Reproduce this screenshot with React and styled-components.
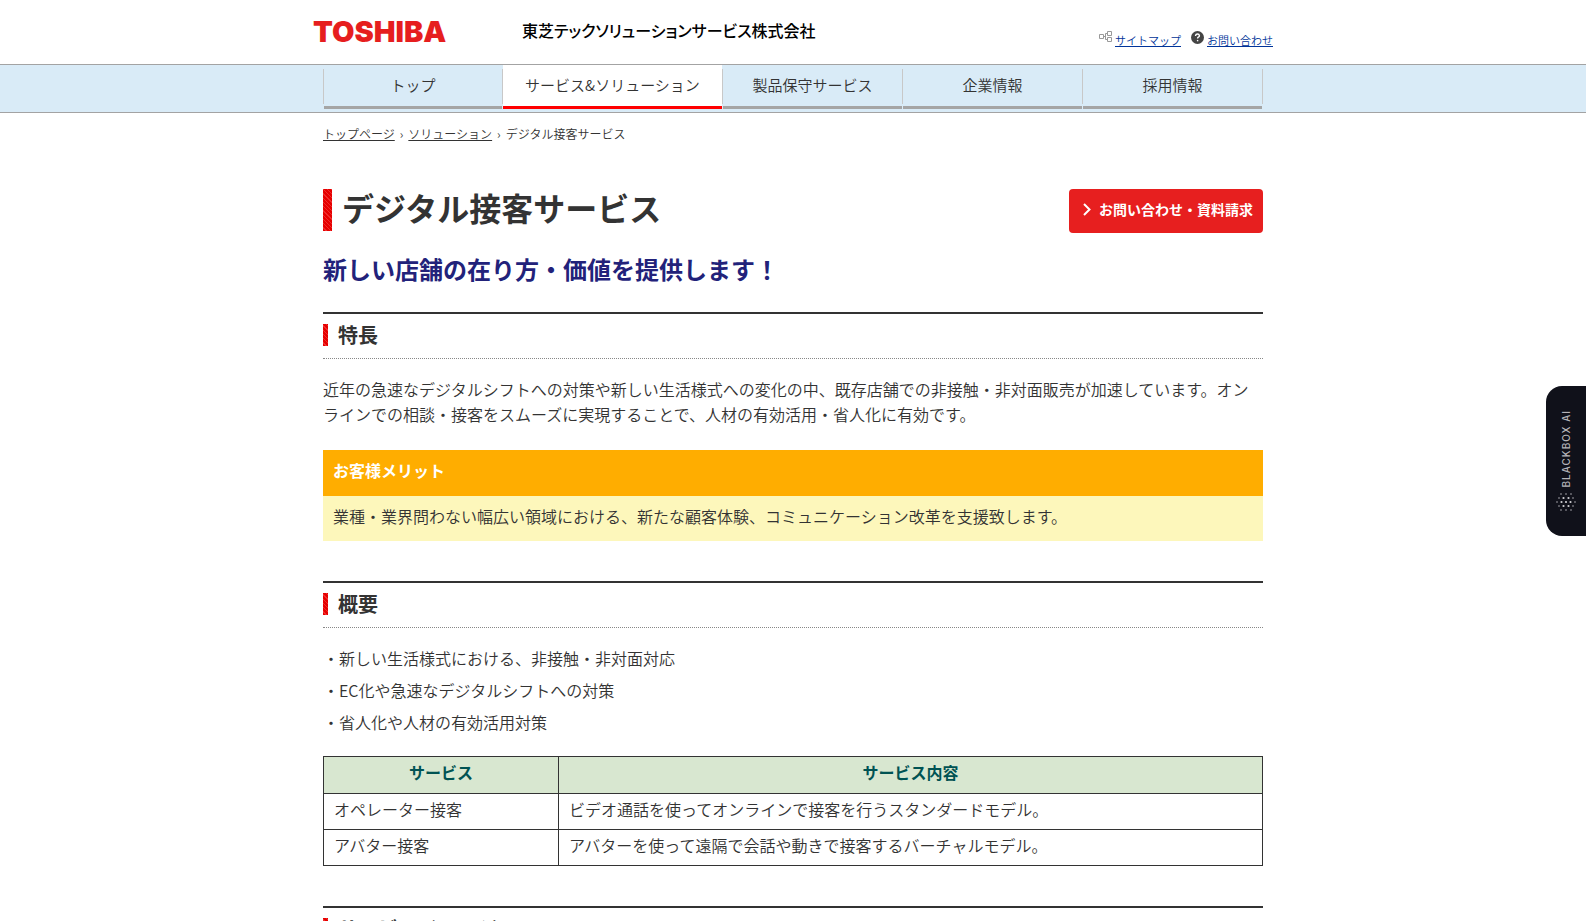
import React from 'react'
import styled, { createGlobalStyle } from 'styled-components';

const GlobalStyle = createGlobalStyle`
html {
  scrollbar-width: none;
}
body {
  margin: 0;
  background-color: #fff;
  color: #333;
  font-family: "Noto Sans CJK JP", sans-serif;
  font-size: 16px;
  font-weight: 350;
  line-height: 25px;
}
`;

const Header = styled.header`
display: flex;
align-items: flex-start;
box-sizing: border-box;
max-width: 960px;
height: 64px;
margin: 0 auto;
`;
const Logo = styled.a`
width: 209px;
padding-top: 16px;
color: #e61e1e;
font-family: Inter, "Liberation Sans", sans-serif;
font-size: 29px;
font-weight: 900;
line-height: 32px;
text-decoration: none;
`;
const Company = styled.p`
flex: 1;
margin: 0;
padding-top: 18px;
color: #000;
font-size: 16px;
font-weight: 500;
font-feature-settings: "palt";
`;
const Utility = styled.nav`
display: flex;
gap: 10px;
padding-top: 31px;
`;
const UtilityItem = styled.div`
display: flex;
align-items: flex-start;
gap: 3px;
`;
const UtilityLink = styled.a`
color: #003399;
font-size: 11px;
line-height: 18px;
`;

const NavBar = styled.nav`
border-top: 1px solid #a3a3a3;
border-bottom: 1px solid #a3a3a3;
background-color: #d9ebf7;
`;
const separator = 'linear-gradient(#c8c8c8, #c8c8c8) no-repeat';
const NavList = styled.ul`
display: grid;
grid-template-columns: 179fr 220fr 180fr 180fr 180fr;
box-sizing: border-box;
max-width: 940px;
margin: 0 auto;
padding: 0 1px 3px 0;
list-style: none;
background: ${separator} right 4px / 1px 35px;
`;
const NavItem = styled.li`
padding-left: 1px;
background: ${separator} 0 4px / 1px 35px;
`;
const NavLink = styled.a`
display: block;
padding-bottom: 2px;
border-bottom: 3px solid ${props => props.$active ? '#f00' : '#a5a5a5'};
background-color: ${props => props.$active ? '#fff' : 'transparent'};
color: #333;
font-size: 15px;
line-height: 39px;
text-align: center;
text-decoration: none;
`;

const Main = styled.main`
max-width: 940px;
margin: 0 auto;
padding-bottom: 40px;
`;
const Breadcrumb = styled.nav`
display: flex;
gap: 5px;
padding: 12px 0 2px;
font-size: 12px;
line-height: 18px;
a {
  color: #333;
}
`;
const TitleRow = styled.div`
display: flex;
justify-content: space-between;
align-items: flex-start;
margin-top: 44px;
`;
const hatch = 'repeating-linear-gradient(45deg, #e60000 0 2px, #f02c2c 2px 3px)';
const Title = styled.h1`
margin: 0;
padding: 0 0 6px 19px;
background: ${hatch} no-repeat 0 0 / 9px 100%;
font-size: 32px;
font-weight: 700;
line-height: 36px;
`;
const ContactLink = styled.a`
display: flex;
align-items: center;
gap: 8px;
padding: 0 10px 4px 14px;
border-radius: 4px;
background-color: #e71f1f;
color: #fff;
font-size: 14px;
font-weight: 700;
line-height: 40px;
text-decoration: none;
`;
const Lead = styled.p`
margin: 18px 0 25px;
color: #22227a;
font-size: 24px;
font-weight: 700;
line-height: 36px;
`;

const Section = styled.section`
margin-bottom: 40px;
`;
const SectionHead = styled.div`
padding: 10px 0 12px;
border-top: 2px solid #333;
border-bottom: 1px dotted #888;
`;
const SectionTitle = styled.h2`
margin: 0;
padding-left: 15px;
background: ${hatch} no-repeat 0 0 / 5px 100%;
font-size: 20px;
font-weight: 700;
line-height: 22px;
`;
const Text = styled.p`
margin: 18px 0 23px;
`;
const MeritTitle = styled.h3`
margin: 0;
padding: 8px 10px 13px;
background-color: #ffad00;
color: #fff;
font-size: 16px;
font-weight: 700;
`;
const MeritText = styled.p`
margin: 0;
padding: 8px 10px 12px;
background-color: #fdf7bb;
`;
const PointList = styled.ul`
margin: 14px 0 18px;
padding: 0;
list-style: none;
line-height: 32px;
`;
const Table = styled.table`
width: 100%;
border-collapse: collapse;
`;
const Th = styled.th`
width: ${props => props.$width || 'auto'};
padding: 3px 10px 8px;
border: 1px solid #333;
background-color: #d8e7d0;
color: #005353;
font-weight: 700;
`;
const Td = styled.td`
padding: 3px 10px 7px;
border: 1px solid #333;
`;

const SideTab = styled.button`
position: fixed;
top: 386px;
right: 0;
display: flex;
flex-direction: column;
align-items: center;
justify-content: center;
gap: 5px;
width: 40px;
height: 150px;
padding: 0;
border: none;
border-radius: 16px 0 0 16px;
background-color: #10111a;
color: #b4b4b8;
cursor: pointer;
`;
const SideLabel = styled.span`
font-family: Inter, sans-serif;
font-size: 10px;
font-weight: 500;
letter-spacing: 1px;
line-height: 12px;
writing-mode: vertical-rl;
rotate: 180deg;
`;

const SitemapIcon = () => (
  <svg width="13" height="11" viewBox="0 0 13 11" fill="none" stroke="#999" aria-hidden="true">
    <path d="M.5 3.5h4v4h-4zM8.5.5h4v4h-4zM8.5 6.5h4v4h-4zM4.5 5.5h2M8.5 2.5h-2v6h2" />
  </svg>
)

const HelpIcon = () => (
  <svg width="13" height="13" viewBox="0 0 13 13" aria-hidden="true">
    <circle cx="6.5" cy="6.5" r="6.5" fill="#444" />
    <path d="M4.6 5V4.4Q4.8 3 6.5 3T8.4 4.7Q8.4 5.6 7.3 6.2Q6.6 6.6 6.6 7.6" fill="none" stroke="#fff" strokeWidth="1.4" />
    <path d="M5.9 8.9h1.4v1.4H5.9z" fill="#fff" />
  </svg>
)

const ArrowIcon = () => (
  <svg width="8" height="13" viewBox="0 0 8 13" fill="none" stroke="#fff" strokeWidth="2" aria-hidden="true">
    <path d="M1 1l5.5 5.5L1 12" />
  </svg>
)

const dotRows = [[5, 10, 15], [3, 7.5, 12.5, 17], [1, 5.5, 10, 14.5, 19], [3, 7.5, 12.5, 17], [5, 10, 15]];

const DotsIcon = () => (
  <svg width="20" height="20" viewBox="0 0 20 20" fill="#d0d0d4" aria-hidden="true">
    {dotRows.map((row, i) => row.map(x => (
      <circle key={`${i}-${x}`} cx={x} cy={2 + i * 4} r={Math.hypot(x - 10, i * 4 - 8) > 7 ? 0.7 : 1.1} />
    )))}
  </svg>
)

const navItems = ['トップ', 'サービス&ソリューション', '製品保守サービス', '企業情報', '採用情報'];

const points = [
  '・新しい生活様式における、非接触・非対面対応',
  '・EC化や急速なデジタルシフトへの対策',
  '・省人化や人材の有効活用対策',
];

const services = [
  { name: 'オペレーター接客', detail: 'ビデオ通話を使ってオンラインで接客を行うスタンダードモデル。' },
  { name: 'アバター接客', detail: 'アバターを使って遠隔で会話や動きで接客するバーチャルモデル。' },
];

const App = () => {
  return (
    <div lang="ja">
      <GlobalStyle />
      <Header>
        <Logo href="#">TOSHIBA</Logo>
        <Company>東芝テックソリューションサービス株式会社</Company>
        <Utility>
          <UtilityItem>
            <SitemapIcon />
            <UtilityLink href="#">サイトマップ</UtilityLink>
          </UtilityItem>
          <UtilityItem>
            <HelpIcon />
            <UtilityLink href="#">お問い合わせ</UtilityLink>
          </UtilityItem>
        </Utility>
      </Header>
      <NavBar>
        <NavList>
          {navItems.map((item, i) => (
            <NavItem key={item}>
              <NavLink href="#" $active={i === 1}>{item}</NavLink>
            </NavItem>
          ))}
        </NavList>
      </NavBar>
      <Main>
        <Breadcrumb>
          <a href="#">トップページ</a>
          <span>›</span>
          <a href="#">ソリューション</a>
          <span>›</span>
          <span>デジタル接客サービス</span>
        </Breadcrumb>
        <TitleRow>
          <Title>デジタル接客サービス</Title>
          <ContactLink href="#"><ArrowIcon />お問い合わせ・資料請求</ContactLink>
        </TitleRow>
        <Lead>新しい店舗の在り方・価値を提供します！</Lead>
        <Section>
          <SectionHead>
            <SectionTitle>特長</SectionTitle>
          </SectionHead>
          <Text>
            近年の急速なデジタルシフトへの対策や新しい生活様式への変化の中、既存店舗での非接触・非対面販売が加速しています。オンラインでの相談・接客をスムーズに実現することで、人材の有効活用・省人化に有効です。
          </Text>
          <MeritTitle>お客様メリット</MeritTitle>
          <MeritText>業種・業界問わない幅広い領域における、新たな顧客体験、コミュニケーション改革を支援致します。</MeritText>
        </Section>
        <Section>
          <SectionHead>
            <SectionTitle>概要</SectionTitle>
          </SectionHead>
          <PointList>
            {points.map(point => <li key={point}>{point}</li>)}
          </PointList>
          <Table>
            <thead>
              <tr>
                <Th $width="214px">サービス</Th>
                <Th>サービス内容</Th>
              </tr>
            </thead>
            <tbody>
              {services.map(service => (
                <tr key={service.name}>
                  <Td>{service.name}</Td>
                  <Td>{service.detail}</Td>
                </tr>
              ))}
            </tbody>
          </Table>
        </Section>
        <Section>
          <SectionHead>
            <SectionTitle>サービスイメージ</SectionTitle>
          </SectionHead>
        </Section>
      </Main>
      <SideTab type="button">
        <SideLabel>BLACKBOX AI</SideLabel>
        <DotsIcon />
      </SideTab>
    </div>
  )
}

export default App;
